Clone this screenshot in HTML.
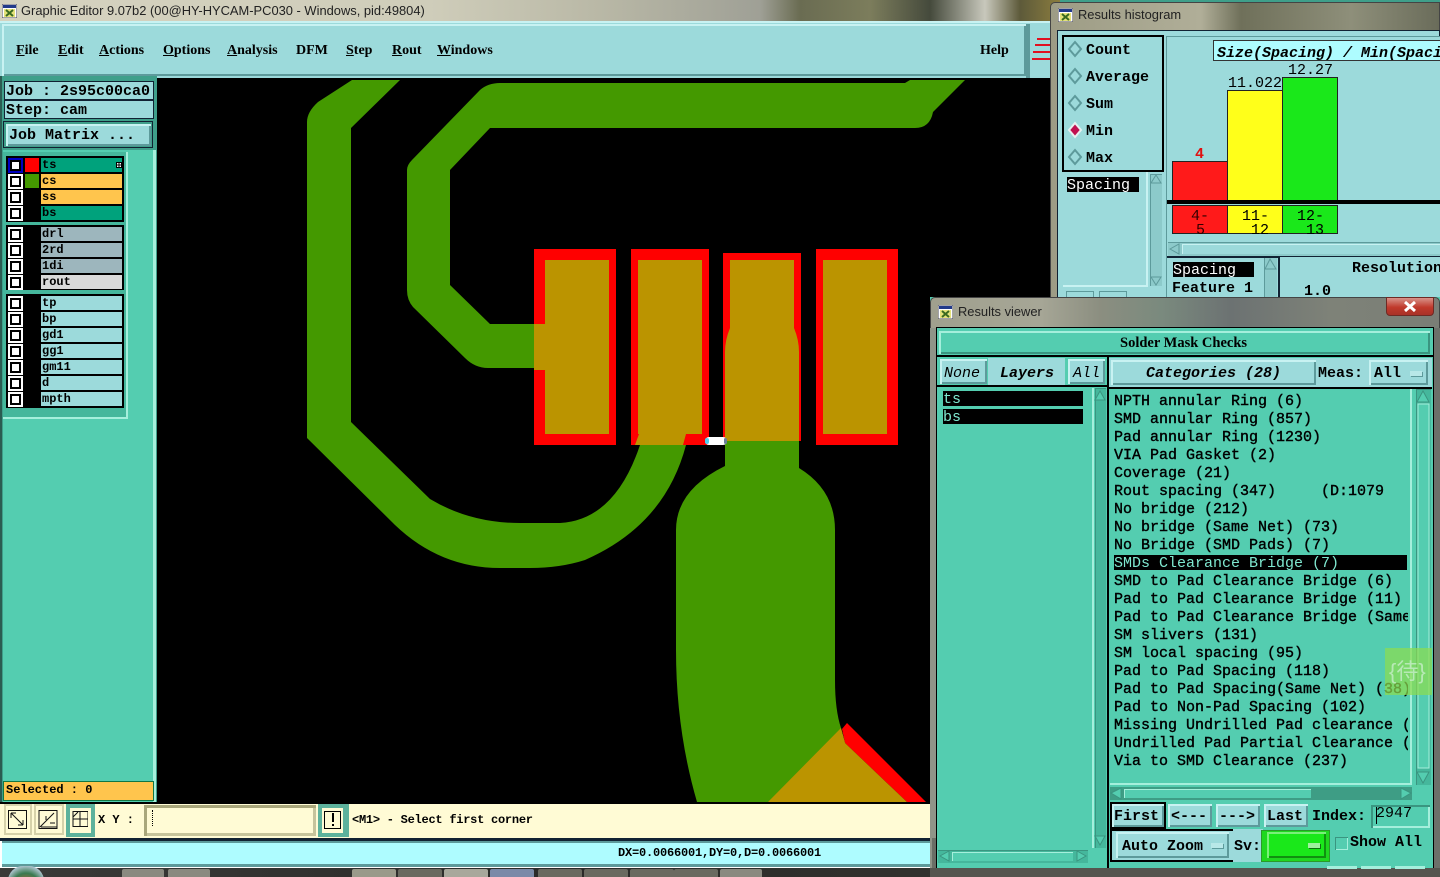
<!DOCTYPE html>
<html><head><meta charset="utf-8"><title>Graphic Editor</title>
<style>
html,body{margin:0;padding:0;width:1440px;height:877px;overflow:hidden;background:#3f9f8a}
div,span{position:absolute;box-sizing:border-box}
#root{left:0;top:0;width:1440px;height:877px;overflow:hidden;background:#3f9f8a}
.t{white-space:pre;font:bold 15px/18px "Liberation Mono",monospace;color:#000;margin-top:2px}
.s{white-space:pre;font:bold 14px/18px "Liberation Serif",serif;color:#000;margin-top:2px}
.s u{text-decoration:underline}
.g{white-space:pre;font:12.9px/18px "Liberation Sans",sans-serif;color:#222}
.l{white-space:pre;font:bold 12px/15px "Liberation Mono",monospace;color:#000;left:42px;margin-top:1px}
.i{font-style:italic}
.n{font-weight:normal}
.b{background:#9cdadb;box-shadow:inset 2px 2px 0 #c8f2f2,inset -2px -2px 0 #5d9a9b}
.bt{background:#54cdb0;box-shadow:inset 2px 2px 0 #a5efdc,inset -2px -2px 0 #3a9580}
.k{background:#000}
.cb{left:8px;width:15px;height:15px;background:#000;border:2px solid #fff}
.cb:after{content:"";position:absolute;left:2px;top:2px;width:7px;height:7px;background:#fff}
.nm{left:41px;width:81px;height:14px}
</style></head><body>
<div id="root">

<!-- main title bar -->
<div style="left:0;top:0;width:1060px;height:24px;background:linear-gradient(90deg,#d5d2bf 0,#cfcdba 430px,#b9b8a6 600px,#9fa096 760px,#6a6c52 800px,#7c7d5c 870px,#454a3c 930px,#c8c8bc 985px,#5d5a3a 1020px,#8a7c3e 1060px)"></div>
<svg style="position:absolute;left:2px;top:4px" width="15" height="14"><rect width="15" height="14" fill="#fff" stroke="#445" /><rect x="1" y="1" width="13" height="3" fill="#223a8a"/><rect x="2" y="5" width="11" height="8" fill="#e4e27a"/><path d="M4 6l7 6M11 6l-7 6" stroke="#3a6a20" stroke-width="2"/></svg>
<div class="g" style="left:21px;top:2px">Graphic Editor 9.07b2 (00@HY-HYCAM-PC030 - Windows, pid:49804)</div>

<!-- menu bar -->
<div style="left:0;top:21px;width:1060px;height:59px;background:#9cdadb;border-top:2px solid #c8f2f2"></div>
<div style="left:1026px;top:24px;width:4px;height:54px;background:#5d9a9b"></div>
<div class="b" style="left:2px;top:24px;width:1024px;height:52px"></div>
<div class="s" style="left:16px;top:40px"><u>F</u>ile</div>
<div class="s" style="left:58px;top:40px"><u>E</u>dit</div>
<div class="s" style="left:99px;top:40px"><u>A</u>ctions</div>
<div class="s" style="left:163px;top:40px"><u>O</u>ptions</div>
<div class="s" style="left:227px;top:40px"><u>A</u>nalysis</div>
<div class="s" style="left:296px;top:40px">DFM</div>
<div class="s" style="left:346px;top:40px"><u>S</u>tep</div>
<div class="s" style="left:392px;top:40px"><u>R</u>out</div>
<div class="s" style="left:437px;top:40px"><u>W</u>indows</div>
<div class="s" style="left:980px;top:40px">Help</div>
<svg style="position:absolute;left:1030px;top:36px" width="22" height="28"><path d="M7 3h14M5 9h16M3 16h18M2 23h19" stroke="#e01020" stroke-width="2"/></svg>

<!-- left panel -->
<div style="left:0;top:76px;width:157px;height:727px;background:#3f9f8a"></div>
<div style="left:0;top:76px;width:2px;height:727px;background:#2b5c52"></div>
<div style="left:4px;top:81px;width:150px;height:19px;background:#9cdadb;border:1px solid #123;border-width:1px"></div>
<div style="left:4px;top:100px;width:150px;height:19px;background:#9cdadb;border:1px solid #123"></div>
<div class="t" style="left:6px;top:81px">Job : 2s95c00ca0</div>
<div class="t" style="left:6px;top:100px">Step: cam</div>
<div class="b" style="left:6px;top:124px;width:145px;height:22px"></div>
<div class="t" style="left:9px;top:125px">Job Matrix ...</div>
<div style="left:3px;top:121px;width:150px;height:27px;border:1px solid #123;"></div>

<div style="left:3px;top:150px;width:152px;height:653px;background:#54cdb0"></div>
<div style="left:153px;top:150px;width:3px;height:653px;background:#a5efdc"></div>
<div style="left:3px;top:152px;width:125px;height:267px;background:#45b79c;border-right:2px solid #a5efdc;border-bottom:2px solid #a5efdc"></div>

<!-- layer groups -->
<div class="k" style="left:6px;top:156px;width:118px;height:66px"></div>
<div class="k" style="left:6px;top:225px;width:118px;height:65px"></div>
<div class="k" style="left:6px;top:294px;width:118px;height:114px"></div>

<div class="cb" style="top:158px;border-color:#0000c0"></div><div style="left:25px;top:158px;width:14px;height:14px;background:#f00"></div>
<div class="nm" style="top:158px;background:#00a27c"></div><div class="l" style="top:157px">ts</div>
<svg style="position:absolute;left:116px;top:162px" width="6" height="6"><rect x=".5" y=".5" width="5" height="5" fill="#fff" stroke="#000"/><path d="M3 0v6M0 3h6" stroke="#000"/></svg>
<div class="cb" style="top:174px"></div><div style="left:25px;top:174px;width:14px;height:14px;background:#449900"></div>
<div class="nm" style="top:174px;background:#ffc54d"></div><div class="l" style="top:173px">cs</div>
<div class="cb" style="top:190px"></div>
<div class="nm" style="top:190px;background:#ffc54d"></div><div class="l" style="top:189px">ss</div>
<div class="cb" style="top:206px"></div>
<div class="nm" style="top:206px;background:#00a27c"></div><div class="l" style="top:205px">bs</div>

<div class="cb" style="top:227px"></div><div class="nm" style="top:227px;background:#9db6bd"></div><div class="l" style="top:226px">drl</div>
<div class="cb" style="top:243px"></div><div class="nm" style="top:243px;background:#9db6bd"></div><div class="l" style="top:242px">2rd</div>
<div class="cb" style="top:259px"></div><div class="nm" style="top:259px;background:#9db6bd"></div><div class="l" style="top:258px">1di</div>
<div class="cb" style="top:275px"></div><div class="nm" style="top:275px;background:#d9d9d9"></div><div class="l" style="top:274px">rout</div>

<div class="cb" style="top:296px"></div><div class="nm" style="top:296px;background:#9cdadb"></div><div class="l" style="top:295px">tp</div>
<div class="cb" style="top:312px"></div><div class="nm" style="top:312px;background:#9cdadb"></div><div class="l" style="top:311px">bp</div>
<div class="cb" style="top:328px"></div><div class="nm" style="top:328px;background:#9cdadb"></div><div class="l" style="top:327px">gd1</div>
<div class="cb" style="top:344px"></div><div class="nm" style="top:344px;background:#9cdadb"></div><div class="l" style="top:343px">gg1</div>
<div class="cb" style="top:360px"></div><div class="nm" style="top:360px;background:#9cdadb"></div><div class="l" style="top:359px">gm11</div>
<div class="cb" style="top:376px"></div><div class="nm" style="top:376px;background:#9cdadb"></div><div class="l" style="top:375px">d</div>
<div class="cb" style="top:392px"></div><div class="nm" style="top:392px;background:#9cdadb"></div><div class="l" style="top:391px">mpth</div>

<div style="left:3px;top:781px;width:151px;height:20px;background:#ffc54d;border:1px solid #174"></div>
<div class="l" style="left:6px;top:782px">Selected : 0</div>

<!-- canvas -->
<svg style="position:absolute;left:157px;top:78px" width="893" height="725" viewBox="157 78 893 725">
<rect x="157" y="78" width="893" height="725" fill="#000"/>
<!-- green traces -->
<path fill="#449900" d="M352 80H400L351 128V422L430 499Q470 523 520 523H560Q615 520 640 445H686Q665 525 585 560Q560 568 530 568H500Q440 568 395 525L307 438V122Q307 112 318 102Z"/>
<path fill="#449900" d="M480 90Q488 83 500 83H905L910 80H965L933 112Q930 128 915 128H490L450 170V285L490 324H545V368H488Q475 368 465 358L413 307Q407 300 407 290V170Q407 165 412 160Z"/>
<path fill="#449900" d="M725 330Q727 326 730 326H794Q797 326 799 332V468Q835 490 835 530V680Q835 710 841 728L850 760L768 802H697Q676 730 676 650V530Q676 490 725 466Z"/>
<!-- pads -->
<path fill="#f00" fill-rule="evenodd" d="M534 249H616V445H534ZM545 260V434H609V260Z"/>
<path fill="#f00" fill-rule="evenodd" d="M631 249H709V445H631ZM638 260V434H702V260Z"/>
<path fill="#f00" fill-rule="evenodd" d="M723 253H801V441H723ZM730 260V441H794V260Z"/>
<path fill="#f00" fill-rule="evenodd" d="M816 249H898V445H816ZM823 260V434H887V260Z"/>
<!-- overlap -->
<rect x="545" y="260" width="64" height="174" fill="#bb9400"/>
<rect x="534" y="324" width="11" height="46" fill="#bb9400"/>
<path fill="#bb9400" d="M638 260H702V434H686L683 445H635L639 434H638Z"/>
<path fill="#bb9400" d="M730 260H794V328Q799 340 799 352V441H725V352Q725 340 730 328Z"/>
<rect x="823" y="260" width="64" height="174" fill="#bb9400"/>
<rect x="725" y="441" width="74" height="28" fill="#449900"/>
<!-- lower triangle -->
<path fill="#f00" d="M842 729L847 723L926 802H907L845 743Z"/>
<path fill="#bb9400" d="M841 728L845 743L907 802H768Z"/>
<!-- measure mark -->
<rect x="705" y="437" width="22" height="8" rx="4" fill="#fff"/>
<rect x="705" y="438" width="4" height="6" rx="2" fill="#4fd0f0"/>
<rect x="724" y="438" width="3" height="6" rx="1.5" fill="#6a7f9a"/>
</svg>

<!-- bottom toolbar -->
<div style="left:0;top:802px;width:932px;height:36px;background:#fffbd5;border-top:2px solid #000"></div>
<div style="left:4px;top:804px;width:28px;height:31px;background:#fffbd5;box-shadow:inset 0 0 0 2px #d6d2aa"></div>
<div style="left:34px;top:804px;width:30px;height:31px;background:#fffbd5;box-shadow:inset 0 0 0 2px #d6d2aa"></div>
<div style="left:66px;top:804px;width:29px;height:33px;background:#fffbd5;box-shadow:inset 0 0 0 4px #5db29c"></div>
<svg style="position:absolute;left:8px;top:810px" width="80" height="22" fill="none" stroke="#111">
<rect x="0.5" y="0.5" width="18" height="18"/><path d="M3 3L15 15M3 3v5M3 3h5M15 15v-5M15 15h-5"/>
<rect x="32" y="0.5" width="18" height="18" transform="translate(-1 0)"/><path d="M32 17L46 3M33 17H49M38 6v4M42 13h5" />
<rect x="65" y="1.500" width="15" height="15"/><path d="M72 2v14M65 9h15M65 7L70 2"/></svg>
<div class="l" style="left:98px;top:812px">X Y :</div>
<div style="left:144px;top:805px;width:172px;height:31px;background:#fffbd5;box-shadow:inset 3px 3px 0 #a9a77b,inset -3px -3px 0 #c6c49c"></div>
<div style="left:152px;top:810px;width:1px;height:16px;border-left:1px dotted #000"></div>
<div style="left:318px;top:804px;width:29px;height:33px;background:#fffbd5;box-shadow:inset 0 0 0 4px #5db29c"></div>
<div style="left:324px;top:811px;width:17px;height:18px;border:1px solid #000"></div>
<div style="left:332px;top:813px;width:2px;height:9px;background:#000"></div>
<div style="left:332px;top:824px;width:2px;height:2px;background:#000"></div>
<div style="left:347px;top:804px;width:2px;height:33px;background:#5db29c"></div>
<div class="l" style="left:352px;top:812px;letter-spacing:-.25px">&lt;M1&gt; - Select first corner</div>
<div style="left:0;top:838px;width:932px;height:31px;background:#fff"></div>
<div style="left:0;top:838px;width:932px;height:3px;background:#123"></div>
<div style="left:2px;top:841px;width:928px;height:26px;background:#aefcff;box-shadow:inset 0 2px 0 #5d9a9b,inset 0 -3px 0 #5d9a9b"></div>
<div class="l" style="left:618px;top:845px;letter-spacing:-.2px">DX=0.0066001,DY=0,D=0.0066001</div>

<!-- taskbar -->
<div style="left:0;top:868px;width:1440px;height:9px;background:linear-gradient(90deg,#3a3a38,#2a2a28 40%,#33332f 70%,#55554f)"></div>
<div style="left:8px;top:866px;width:36px;height:30px;border-radius:18px;background:radial-gradient(circle at 50% 70%,#e06030,#3a7a50 50%,#bcd 80%)"></div>
<div style="left:122px;top:869px;width:42px;height:8px;background:#8a8a80;border-radius:2px 2px 0 0"></div>
<div style="left:168px;top:869px;width:42px;height:8px;background:#8a8a80;border-radius:2px 2px 0 0"></div>
<div style="left:352px;top:869px;width:44px;height:8px;background:#9a9a8a;border-radius:2px 2px 0 0"></div>
<div style="left:398px;top:869px;width:44px;height:8px;background:#6a6a60;border-radius:2px 2px 0 0"></div>
<div style="left:444px;top:869px;width:44px;height:8px;background:#a8a89c;border-radius:2px 2px 0 0"></div>
<div style="left:490px;top:869px;width:44px;height:8px;background:#7a8aa8;border-radius:2px 2px 0 0"></div>
<div style="left:538px;top:869px;width:44px;height:8px;background:#6a6a60;border-radius:2px 2px 0 0"></div>
<div style="left:584px;top:869px;width:44px;height:8px;background:#6a6a60;border-radius:2px 2px 0 0"></div>
<div style="left:630px;top:869px;width:44px;height:8px;background:#6a6a60;border-radius:2px 2px 0 0"></div>
<div style="left:674px;top:869px;width:44px;height:8px;background:#6a6a60;border-radius:2px 2px 0 0"></div>
<div style="left:720px;top:869px;width:42px;height:8px;background:#8a8a80;border-radius:2px 2px 0 0"></div>

<!-- Results histogram window -->
<div style="left:1050px;top:2px;width:390px;height:300px;background:linear-gradient(90deg,#9d9c85,#b0ae98 150px,#6f705a 190px,#8e8f7a 300px,#6a6c5a);border-radius:5px 0 0 0;border:1px solid #444"></div>
<svg style="position:absolute;left:1058px;top:8px" width="15" height="14"><rect width="15" height="14" fill="#fff" stroke="#445"/><rect x="1" y="1" width="13" height="3" fill="#223a8a"/><rect x="2" y="5" width="11" height="8" fill="#e4e27a"/><path d="M4 6l7 6M11 6l-7 6" stroke="#3a6a20" stroke-width="2"/></svg>
<div class="g" style="left:1078px;top:6px">Results histogram</div>
<div style="left:1057px;top:30px;width:383px;height:270px;background:#9cdadb;border:1px solid #123"></div>
<div style="left:1062px;top:35px;width:102px;height:137px;background:#9cdadb;border:2px solid #000"></div>
<svg style="position:absolute;left:1067px;top:39px" width="20" height="130">
<g fill="#9cdadb" stroke-width="2"><path d="M8 3L14 10 8 17 2 10Z" stroke="#5d9a9b"/><path d="M8 30L14 37 8 44 2 37Z" stroke="#5d9a9b"/><path d="M8 57L14 64 8 71 2 64Z" stroke="#5d9a9b"/><path d="M8 84L14 91 8 98 2 91Z" stroke="#e8f0f0" fill="#c01050"/><path d="M8 111L14 118 8 125 2 118Z" stroke="#5d9a9b"/></g></svg>
<div class="t" style="left:1086px;top:40px">Count</div>
<div class="t" style="left:1086px;top:67px">Average</div>
<div class="t" style="left:1086px;top:94px">Sum</div>
<div class="t" style="left:1086px;top:121px">Min</div>
<div class="t" style="left:1086px;top:148px">Max</div>
<div class="k" style="left:1067px;top:177px;width:72px;height:15px"></div>
<div class="t n" style="left:1067px;top:175px;color:#fff">Spacing</div>
<div style="left:1063px;top:172px;width:85px;height:115px;box-shadow:inset -2px -2px 0 #c8f2f2"></div>
<div style="left:1150px;top:174px;width:12px;height:112px;background:#8ccaca;box-shadow:inset 1px 1px 0 #5d9a9b"></div>
<svg style="position:absolute;left:1150px;top:174px" width="12" height="112"><path d="M6 1L11 9H1Z M6 111L11 103H1Z" fill="#8ccaca" stroke="#5d9a9b"/></svg>
<div style="left:1066px;top:291px;width:28px;height:9px;background:#9cdadb;border:1px solid #5d9a9b"></div>
<div style="left:1099px;top:291px;width:28px;height:9px;background:#9cdadb;border:1px solid #5d9a9b"></div>

<div style="left:1166px;top:36px;width:274px;height:264px;background:#9cdadb;border-left:1px solid #5d9a9b;border-top:1px solid #5d9a9b"></div>
<div style="left:1213px;top:40px;width:227px;height:21px;background:#aefcff;border:1px solid #333;border-right:0"></div>
<div class="t i" style="left:1217px;top:43px;letter-spacing:0">Size(Spacing) / Min(Spaci</div>
<div class="t n" style="left:1228px;top:73px;">11.022</div>
<div class="t n" style="left:1288px;top:60px;">12.27</div>
<div class="t" style="left:1195px;top:144px;color:#e01010">4</div>
<div style="left:1172px;top:161px;width:56px;height:40px;background:#ff1a1a;border:1px solid #222"></div>
<div style="left:1227px;top:90px;width:56px;height:111px;background:#ffff1a;border:1px solid #222"></div>
<div style="left:1282px;top:77px;width:56px;height:124px;background:#1ae81a;border:1px solid #222"></div>
<div class="k" style="left:1167px;top:200px;width:273px;height:4px"></div>
<div style="left:1172px;top:205px;width:56px;height:29px;background:#ff1a1a;border:1px solid #222;overflow:hidden"></div>
<div style="left:1227px;top:205px;width:56px;height:29px;background:#ffff1a;border:1px solid #222"></div>
<div style="left:1282px;top:205px;width:56px;height:29px;background:#1ae81a;border:1px solid #222"></div>
<div class="t n" style="left:1191px;top:206px;color:#300">4-</div>
<div class="t n" style="left:1196px;top:220px;height:15px;overflow:hidden;color:#300">5</div>
<div class="t n" style="left:1242px;top:206px">11-</div>
<div class="t n" style="left:1251px;top:220px;height:15px;overflow:hidden">12</div>
<div class="t n" style="left:1297px;top:206px">12-</div>
<div class="t n" style="left:1306px;top:220px;height:15px;overflow:hidden">13</div>
<div style="left:1168px;top:242px;width:272px;height:14px;background:#8ccaca;box-shadow:inset 0 1px 0 #5d9a9b"></div>
<div style="left:1182px;top:244px;width:258px;height:10px;background:#9cdadb;box-shadow:inset 1px 1px 0 #c8f2f2"></div>
<svg style="position:absolute;left:1169px;top:243px" width="12" height="12"><path d="M1 6L10 1V11Z" fill="#8ccaca" stroke="#5d9a9b"/></svg>
<div style="left:1167px;top:256px;width:273px;height:2px;background:#123"></div>
<div class="k" style="left:1173px;top:262px;width:81px;height:15px"></div>
<div class="t n" style="left:1173px;top:260px;color:#fff">Spacing</div>
<div class="t" style="left:1172px;top:278px">Feature 1</div>
<div style="left:1264px;top:258px;width:13px;height:42px;background:#8ccaca;box-shadow:inset 1px 0 0 #5d9a9b"></div>
<svg style="position:absolute;left:1264px;top:258px" width="13" height="14"><path d="M6 1L12 11H1Z" fill="#8ccaca" stroke="#5d9a9b"/></svg>
<div style="left:1278px;top:257px;width:162px;height:43px;background:#9cdadb;border-left:2px solid #123"></div>
<div class="t" style="left:1352px;top:258px">Resolution</div>
<div class="t" style="left:1304px;top:281px">1.0</div>

<!-- Results viewer window -->
<div style="left:930px;top:297px;width:510px;height:571px;background:#54cdb0"></div>
<div style="left:930px;top:297px;width:510px;height:31px;background:linear-gradient(90deg,#a0a08e,#a6a696 110px,#8b8e80 170px,#7a8a7e 230px,#6c7272 300px,#7e8278 400px,#7a7e76);border:1px solid #444;border-bottom:0;border-radius:5px 5px 0 0"></div>
<div style="left:930px;top:328px;width:6px;height:540px;background:#8f9488"></div>
<div style="left:1434px;top:328px;width:6px;height:540px;background:#6c706a"></div>
<svg style="position:absolute;left:938px;top:305px" width="15" height="14"><rect width="15" height="14" fill="#fff" stroke="#445"/><rect x="1" y="1" width="13" height="3" fill="#223a8a"/><rect x="2" y="5" width="11" height="8" fill="#e4e27a"/><path d="M4 6l7 6M11 6l-7 6" stroke="#3a6a20" stroke-width="2"/></svg>
<div class="g" style="left:958px;top:303px">Results viewer</div>
<div style="left:1386px;top:297px;width:48px;height:19px;background:linear-gradient(#d8938a,#c0392b 55%,#a83228);border:1px solid #6e2a24;border-radius:0 0 4px 4px"></div>
<svg style="position:absolute;left:1403px;top:301px" width="14" height="11"><path d="M2 1L12 10M12 1L2 10" stroke="#fff" stroke-width="3"/></svg>

<div style="left:936px;top:327px;width:498px;height:541px;background:#54cdb0;border:1px solid #000;border-bottom:0"></div>
<div class="bt" style="left:939px;top:331px;width:491px;height:23px"></div>
<div class="s" style="left:1120px;top:332px;font-size:14.5px">Solder Mask Checks</div>
<div class="k" style="left:937px;top:355px;width:496px;height:2px"></div>
<div class="k" style="left:1107px;top:357px;width:2px;height:511px"></div>

<div class="b" style="left:940px;top:359px;width:47px;height:25px"></div>
<div class="t n i" style="left:944px;top:363px">None</div>
<div style="left:988px;top:358px;width:77px;height:27px;background:#9cdadb"></div>
<div class="t i" style="left:1000px;top:363px">Layers</div>
<div class="b" style="left:1068px;top:359px;width:37px;height:25px"></div>
<div class="t n i" style="left:1073px;top:363px">All</div>
<div class="k" style="left:937px;top:385px;width:170px;height:2px"></div>

<div class="k" style="left:943px;top:391px;width:140px;height:15px"></div>
<div class="k" style="left:943px;top:409px;width:140px;height:15px"></div>
<div class="t n" style="left:943px;top:389px;color:#7fe8d0">ts</div>
<div class="t n" style="left:943px;top:407px;color:#7fe8d0">bs</div>
<div style="left:1092px;top:388px;width:2px;height:460px;background:#a5efdc"></div>
<div style="left:1095px;top:388px;width:11px;height:460px;background:#45b79c;box-shadow:inset 1px 1px 0 #3a9580"></div>
<svg style="position:absolute;left:1094px;top:390px" width="12" height="456"><path d="M6 1L11 10H1Z M6 455L11 446H1Z" fill="#54cdb0" stroke="#3a9580"/></svg>
<div style="left:938px;top:850px;width:150px;height:13px;background:#45b79c;box-shadow:inset 0 1px 0 #3a9580"></div>
<div style="left:952px;top:852px;width:121px;height:9px;background:#54cdb0;box-shadow:inset 1px 1px 0 #a5efdc"></div>
<svg style="position:absolute;left:939px;top:850px" width="148" height="13"><path d="M1 6L10 1V11Z M147 6L138 1V11Z" fill="#54cdb0" stroke="#3a9580"/></svg>

<div style="left:1109px;top:358px;width:323px;height:29px;background:#9cdadb"></div>
<div class="b" style="left:1111px;top:360px;width:205px;height:25px"></div>
<div class="t i" style="left:1146px;top:363px">Categories (28)</div>
<div class="t" style="left:1318px;top:363px">Meas:</div>
<div class="b" style="left:1369px;top:360px;width:59px;height:25px"></div>
<div class="t" style="left:1374px;top:363px">All</div>
<div style="left:1410px;top:371px;width:12px;height:5px;background:#b8e8e8;box-shadow:1px 1px 0 #5d9a9b"></div>
<div class="k" style="left:1109px;top:387px;width:323px;height:2px"></div>

<div style="left:1110px;top:389px;width:302px;height:396px;overflow:hidden;box-shadow:inset -2px -2px 0 #a5efdc">
<div class="k" style="left:4px;top:166px;width:293px;height:15px"></div>
<div class="t n" style="left:4px;top:0;margin-top:4px;width:294px;overflow:hidden;-webkit-text-stroke:.4px #000">NPTH annular Ring (6)
SMD annular Ring (857)
Pad annular Ring (1230)
VIA Pad Gasket (2)
Coverage (21)
Rout spacing (347)     (D:1079
No bridge (212)
No bridge (Same Net) (73)
No Bridge (SMD Pads) (7)
<span style="position:static;color:#7fe8d0;-webkit-text-stroke:0">SMDs Clearance Bridge (7)</span>
SMD to Pad Clearance Bridge (6)
Pad to Pad Clearance Bridge (11)
Pad to Pad Clearance Bridge (Same
SM slivers (131)
SM local spacing (95)
Pad to Pad Spacing (118)
Pad to Pad Spacing(Same Net) (38)
Pad to Non-Pad Spacing (102)
Missing Undrilled Pad clearance (
Undrilled Pad Partial Clearance (
Via to SMD Clearance (237)</div>
</div>
<div style="left:1416px;top:389px;width:15px;height:396px;background:#45b79c;box-shadow:inset 1px 1px 0 #3a9580"></div>
<svg style="position:absolute;left:1416px;top:390px" width="15" height="394"><path d="M7 1L13 12H1Z M7 393L13 382H1Z" fill="#54cdb0" stroke="#3a9580"/><path d="M2 14H13V378H2Z" fill="#54cdb0" stroke="#a5efdc"/></svg>

<div style="left:1110px;top:787px;width:302px;height:13px;background:#3e9d85"></div>
<div style="left:1124px;top:789px;width:187px;height:9px;background:#54cdb0;box-shadow:inset 1px 1px 0 #a5efdc"></div>
<svg style="position:absolute;left:1110px;top:787px" width="302" height="13"><path d="M1 6L11 1V12Z M301 6L291 1V12Z" fill="#54cdb0" stroke="#3a9580"/></svg>

<div class="k" style="left:1110px;top:802px;width:56px;height:27px"></div>
<div class="b" style="left:1112px;top:804px;width:52px;height:23px"></div>
<div class="t" style="left:1114px;top:806px">First</div>
<div class="b" style="left:1168px;top:804px;width:44px;height:23px"></div>
<div class="t" style="left:1171px;top:806px">&lt;---</div>
<div class="b" style="left:1216px;top:804px;width:44px;height:23px"></div>
<div class="t" style="left:1219px;top:806px">---&gt;</div>
<div class="b" style="left:1264px;top:804px;width:44px;height:23px"></div>
<div class="t" style="left:1267px;top:806px">Last</div>
<div class="t" style="left:1312px;top:806px">Index:</div>
<div class="bt" style="left:1371px;top:805px;width:59px;height:23px;box-shadow:inset 2px 2px 0 #3a9580,inset -2px -2px 0 #a5efdc"></div>
<div class="t n" style="left:1376px;top:803px">2947</div>
<div style="left:1376px;top:807px;width:1px;height:17px;background:#000"></div>

<div class="k" style="left:1110px;top:829px;width:125px;height:33px"></div>
<div style="left:1112px;top:831px;width:121px;height:29px;background:#9cdadb"></div>
<div class="b" style="left:1116px;top:832px;width:113px;height:26px"></div>
<div class="t" style="left:1122px;top:836px">Auto Zoom</div>
<div style="left:1211px;top:843px;width:12px;height:5px;background:#b8e8e8;box-shadow:1px 1px 0 #5d9a9b"></div>
<div style="left:1233px;top:829px;width:30px;height:33px;background:#9cdadb"></div>
<div class="t" style="left:1234px;top:836px">Sv:</div>
<div style="left:1261px;top:830px;width:69px;height:32px;background:#1fd81f;border:1px solid #2a9a2a"></div>
<div style="left:1267px;top:832px;width:59px;height:26px;background:#1ae81a;box-shadow:inset 2px 2px 0 #7af07a,inset -2px -2px 0 #109010"></div>
<div style="left:1308px;top:843px;width:12px;height:5px;background:#a0f0a0;box-shadow:1px 1px 0 #107010"></div>
<div style="left:1335px;top:837px;width:13px;height:13px;background:#54cdb0;box-shadow:inset 1px 1px 0 #3a9580,inset -1px -1px 0 #a5efdc"></div>
<div class="t" style="left:1350px;top:832px">Show All</div>

<!-- bottom of viewer -->
<div style="left:930px;top:868px;width:510px;height:9px;background:#55554f"></div>
<div style="left:1327px;top:866px;width:30px;height:3px;background:#a5efdc"></div>
<div style="left:1361px;top:866px;width:30px;height:3px;background:#a5efdc"></div>
<div style="left:1395px;top:866px;width:30px;height:3px;background:#a5efdc"></div>
<div style="left:932px;top:838px;width:4px;height:30px;background:#6a6e66"></div>

<!-- floating IME widget -->
<div style="left:1385px;top:648px;width:47px;height:47px;background:rgba(140,220,80,.72)"></div>
<div style="left:1389px;top:654px;width:42px;height:36px;white-space:pre;font:22px/36px 'Liberation Sans','Noto Sans CJK SC',sans-serif;color:rgba(190,235,190,.9)">{待}</div>

</div>
</body></html>
